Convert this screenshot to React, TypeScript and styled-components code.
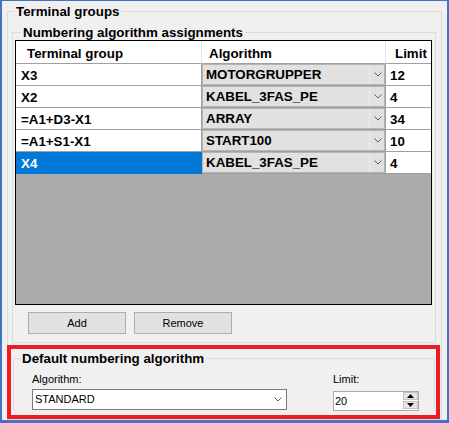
import styled, { createGlobalStyle } from "styled-components";

type Assignment = {
  group: string;
  algorithm: string;
  limit: number;
  selected?: boolean;
};

const assignments: Assignment[] = [
  { group: "X3", algorithm: "MOTORGRUPPER", limit: 12 },
  { group: "X2", algorithm: "KABEL_3FAS_PE", limit: 4 },
  { group: "=A1+D3-X1", algorithm: "ARRAY", limit: 34 },
  { group: "=A1+S1-X1", algorithm: "START100", limit: 10 },
  { group: "X4", algorithm: "KABEL_3FAS_PE", limit: 4, selected: true },
];

function Chevron() {
  return (
    <svg width="8" height="5" viewBox="0 0 8 5">
      <polyline points="0.5,0.5 4,4 7.5,0.5" fill="none" stroke="#606060" strokeWidth="1" />
    </svg>
  );
}

function Triangle({ up }: { up?: boolean }) {
  return (
    <svg width="7" height="4" viewBox="0 0 7 4">
      <polygon points={up ? "0,4 7,4 3.5,0" : "0,0 7,0 3.5,4"} fill="#000" />
    </svg>
  );
}

export default function App() {
  return (
    <>
      <GlobalStyle />
      <Window>
        <OuterGroup>
          <Legend>Terminal groups</Legend>
          <AssignGroup>
            <Legend>Numbering algorithm assignments</Legend>
            <Grid>
              <Row>
                <HeaderCell $pad={11}>Terminal group</HeaderCell>
                <HeaderCell $pad={7}>Algorithm</HeaderCell>
                <HeaderCell $pad={9} $last>
                  Limit
                </HeaderCell>
              </Row>
              {assignments.map((a) => (
                <Row key={a.group}>
                  <TextCell $selected={a.selected}>{a.group}</TextCell>
                  <ComboCell>
                    <CellCombo>
                      <CellComboText>{a.algorithm}</CellComboText>
                      <CellDrop>
                        <Chevron />
                      </CellDrop>
                    </CellCombo>
                  </ComboCell>
                  <LimitCell>{a.limit}</LimitCell>
                </Row>
              ))}
              <Filler />
            </Grid>
            <ButtonRow>
              <Button>Add</Button>
              <Button>Remove</Button>
            </ButtonRow>
          </AssignGroup>
          <Highlight>
            <DefaultGroup>
              <Legend>Default numbering algorithm</Legend>
              <Fields>
                <Field>
                  <FieldLabel>Algorithm:</FieldLabel>
                  <ComboBox>
                    <ComboValue>STANDARD</ComboValue>
                    <ComboDrop>
                      <Chevron />
                    </ComboDrop>
                  </ComboBox>
                </Field>
                <Field>
                  <FieldLabel $gap={5}>Limit:</FieldLabel>
                  <NumericBox>
                    <NumericValue>20</NumericValue>
                    <Spinner>
                      <SpinButton>
                        <Triangle up />
                      </SpinButton>
                      <SpinButton>
                        <Triangle />
                      </SpinButton>
                    </Spinner>
                  </NumericBox>
                </Field>
              </Fields>
            </DefaultGroup>
          </Highlight>
        </OuterGroup>
      </Window>
    </>
  );
}

// --- Styles ---

const GlobalStyle = createGlobalStyle`
  html, body {
    margin: 0;
    padding: 0;
    background: #ffffff;
  }
  body {
    font-family: "Liberation Sans", Arial, sans-serif;
    color: #000;
  }
  * {
    box-sizing: border-box;
  }
`;

const Window = styled.div`
  width: 449px;
  height: 423px;
  background: #f0f0f0;
  border-style: solid;
  border-color: #4472c4;
  border-width: 1px 2px 3px 2px;
  padding: 0 5px;
  overflow: hidden;
`;

const GroupBox = styled.fieldset`
  margin: 0;
  padding: 0;
  min-width: 0;
  border: 1px solid #dcdcdc;
`;

const Legend = styled.legend`
  margin-left: 6px;
  padding: 0 2px;
  font-size: 13.33px;
  font-weight: 700;
  line-height: 13px;
  color: #000;
`;

const OuterGroup = styled(GroupBox)`
  margin-top: 4px;
  width: 435px;
`;

const AssignGroup = styled(GroupBox)`
  margin: 8px 0 0 4px;
  width: 424px;
  padding: 1px 0 8px 2px;
`;

const Grid = styled.div`
  width: 417px;
  height: 265px;
  border: 1px solid #000;
  background: #ababab;
  display: flex;
  flex-direction: column;
`;

const Row = styled.div`
  display: grid;
  grid-template-columns: 186px 184px 45px;
`;

const HeaderCell = styled.div<{ $pad: number; $last?: boolean }>`
  height: 23px;
  background: #fff;
  border-bottom: 1px solid #a0a0a0;
  border-right: ${(p) => (p.$last ? "none" : "1px solid #e5e5e5")};
  padding: 3px 0 0 ${(p) => p.$pad}px;
  font-size: 13.33px;
  font-weight: 700;
  line-height: 19px;
  white-space: nowrap;
`;

const BodyCell = styled.div`
  height: 22px;
  border-bottom: 1px solid #a0a0a0;
  border-right: 1px solid #a0a0a0;
  font-size: 13.33px;
  font-weight: 700;
  line-height: 19px;
  white-space: nowrap;
`;

const TextCell = styled(BodyCell)<{ $selected?: boolean }>`
  padding: 2px 0 0 5px;
  background: ${(p) => (p.$selected ? "#0078d7" : "#fff")};
  color: ${(p) => (p.$selected ? "#fff" : "#000")};
  border-color: ${(p) => (p.$selected ? "#0078d7" : "#a0a0a0")};
`;

const ComboCell = styled(BodyCell)`
  background: #fff;
`;

const CellCombo = styled.div`
  height: 21px;
  display: flex;
  background: #e1e1e1;
  border: 1px solid #b4b4b4;
`;

const CellComboText = styled.div`
  flex: 1;
  padding: 1px 0 0 3px;
  line-height: 18px;
`;

const CellDrop = styled.div`
  width: 15px;
  border-left: 1px solid #ededed;
  display: flex;
  align-items: center;
  justify-content: center;
  padding-left: 1px;
`;

const LimitCell = styled(BodyCell)`
  background: #fff;
  border-right: none;
  padding: 2px 0 0 4px;
`;

const Filler = styled.div`
  flex: 1;
`;

const ButtonRow = styled.div`
  display: flex;
  gap: 8px;
  margin-top: 7px;
  padding-left: 13px;
`;

const Button = styled.button`
  width: 98px;
  height: 22px;
  padding: 0;
  background: #e1e1e1;
  border: 1px solid #adadad;
  font-family: "Liberation Sans", Arial, sans-serif;
  font-size: 11px;
  line-height: 20px;
  color: #000;
`;

const Highlight = styled.div`
  margin: 2px 0 0 -1px;
  width: 433px;
  height: 74px;
  border: 4px solid #ed1c24;
  padding-left: 2px;
  overflow: hidden;
`;

const DefaultGroup = styled(GroupBox)`
  margin-top: 3px;
  width: 422px;
  border-bottom: none;
`;

const Fields = styled.div`
  display: flex;
  gap: 46px;
  padding: 8px 0 0 18px;
`;

const Field = styled.div`
  display: flex;
  flex-direction: column;
`;

const FieldLabel = styled.div<{ $gap?: number }>`
  font-size: 11px;
  line-height: 13px;
  margin-bottom: ${(p) => p.$gap ?? 3}px;
`;

const ComboBox = styled.div`
  width: 255px;
  height: 21px;
  display: flex;
  background: #fff;
  border: 1px solid #7a7a7a;
`;

const ComboValue = styled.div`
  flex: 1;
  padding-left: 2px;
  font-size: 11px;
  line-height: 19px;
`;

const ComboDrop = styled.div`
  width: 16px;
  display: flex;
  align-items: center;
  justify-content: center;
`;

const NumericBox = styled.div`
  width: 86px;
  height: 20px;
  display: flex;
  background: #fff;
  border: 1px solid #ababab;
`;

const NumericValue = styled.div`
  flex: 1;
  padding-left: 1px;
  font-size: 11px;
  line-height: 18px;
`;

const Spinner = styled.div`
  width: 15px;
  display: flex;
  flex-direction: column;
  gap: 1px;
  padding-bottom: 1px;
`;

const SpinButton = styled.div`
  flex: 1;
  background: #e5e5e5;
  border: 1px solid #c4c4c4;
  display: flex;
  align-items: center;
  justify-content: center;
`;
